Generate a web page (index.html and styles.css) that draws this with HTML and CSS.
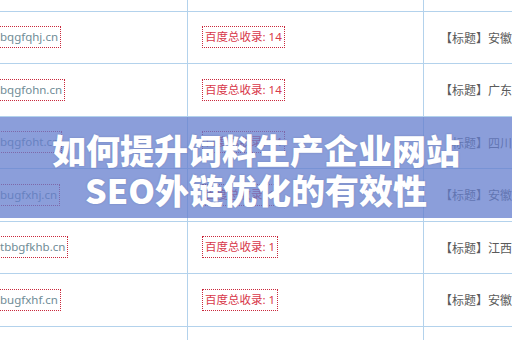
FILE: index.html
```html
<!DOCTYPE html>
<html lang="zh-CN">
<head>
<meta charset="utf-8">
<title>如何提升饲料生产企业网站SEO外链优化的有效性</title>
<link rel="stylesheet" href="styles.css">
</head>
<body>
<div class="page">
  <div class="table">
    <div class="row">
      <div class="cell c1"><span class="box url">bqgfqaa.cn</span></div>
      <div class="cell c2"><span class="box count">百度总收录: 14</span></div>
      <div class="cell c3">【标题】安徽新材料科技有限公司</div>
    </div>
    <div class="row">
      <div class="cell c1"><span class="box url">bqgfqhj.cn</span></div>
      <div class="cell c2"><span class="box count">百度总收录: 14</span></div>
      <div class="cell c3">【标题】安徽新材料科技有限公司</div>
    </div>
    <div class="row">
      <div class="cell c1"><span class="box url">bqgfohn.cn</span></div>
      <div class="cell c2"><span class="box count">百度总收录: 14</span></div>
      <div class="cell c3">【标题】广东汽车配件有限公司</div>
    </div>
    <div class="row">
      <div class="cell c1"><span class="box url">bqgfoht.cn</span></div>
      <div class="cell c2"><span class="box count">百度总收录: 14</span></div>
      <div class="cell c3">【标题】四川天府饲料有限公司</div>
    </div>
    <div class="row">
      <div class="cell c1"><span class="box url">bugfxhj.cn</span></div>
      <div class="cell c2"><span class="box count">百度总收录: 1</span></div>
      <div class="cell c3">【标题】安徽股份有限公司</div>
    </div>
    <div class="row">
      <div class="cell c1"><span class="box url">tbbgfkhb.cn</span></div>
      <div class="cell c2"><span class="box count">百度总收录: 1</span></div>
      <div class="cell c3">【标题】江西铁路机械有限公司</div>
    </div>
    <div class="row">
      <div class="cell c1"><span class="box url">bugfxhf.cn</span></div>
      <div class="cell c2"><span class="box count">百度总收录: 1</span></div>
      <div class="cell c3">【标题】安徽银河饲料有限公司</div>
    </div>
    <div class="row">
      <div class="cell c1"><span class="box url">bugfxhk.cn</span></div>
      <div class="cell c2"><span class="box count">百度总收录: 1</span></div>
      <div class="cell c3">【标题】安徽饲料有限公司</div>
    </div>
  </div>
  <div class="banner">
    <h1 class="title">如何提升饲料生产企业网站<br>SEO外链优化的有效性</h1>
  </div>
</div>
</body>
</html>
```

FILE: styles.css
```css
html, body {
  margin: 0;
  padding: 0;
  background: #ffffff;
}

.page {
  position: relative;
  width: 512px;
  height: 340px;
  overflow: hidden;
  background: #ffffff;
  font-family: "Noto Sans", "Noto Sans CJK SC", sans-serif;
}

.table {
  margin-top: -41px;
  margin-left: -40px;
  display: flex;
  flex-direction: column;
}

.row {
  display: grid;
  grid-template-columns: 228px 236px 200px;
  height: 51.5px;
  border-bottom: 1px solid #b3d2ec;
}

.cell {
  display: flex;
  align-items: center;
  white-space: nowrap;
  overflow: hidden;
}

.c1 {
  border-right: 1px solid #b3d2ec;
  padding-left: 37px;
}

.c2 {
  border-right: 1px solid #b3d2ec;
  padding-left: 14px;
}

.c3 {
  padding-left: 16px;
  font-size: 12px;
  color: #5a5a5a;
  font-family: "Noto Sans CJK SC", sans-serif;
}

.box {
  display: inline-block;
  border: 1px dotted #c9283c;
  padding: 2px 2px 2px 2px;
  line-height: 16px;
  font-size: 11.5px;
}

.url {
  color: #6f8c96;
}

.count {
  color: #d8384a;
  font-family: "Noto Sans", "Noto Sans CJK SC", sans-serif;
}

.banner {
  position: absolute;
  left: 0;
  right: 0;
  top: 117px;
  height: 101px;
  box-sizing: border-box;
  padding-top: 13px;
  background: rgba(100, 125, 205, 0.75);
}

.title {
  margin: 0;
  text-align: center;
  color: #ffffff;
  font-family: "Noto Sans CJK SC", sans-serif;
  font-weight: 900;
  font-size: 34px;
  line-height: 40px;
  letter-spacing: 0;
  text-shadow: 0 0 2px rgba(40, 50, 90, 0.25);
}
```
